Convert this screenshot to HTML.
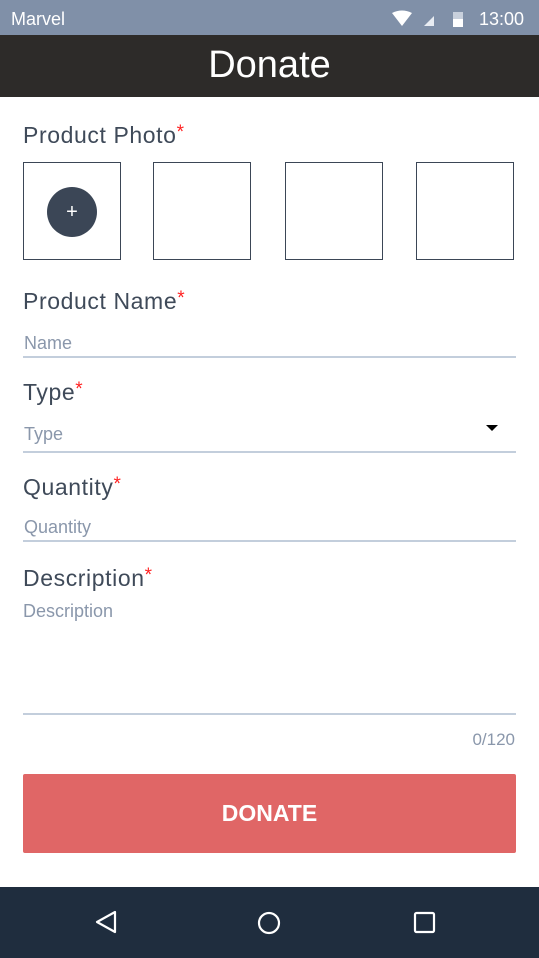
<!DOCTYPE html><html><head><style>
body{margin:0;width:539px;height:958px;position:relative;background:#fff;font-family:"Liberation Sans",sans-serif;overflow:hidden}
.a{position:absolute;white-space:nowrap}
.lbl{font-size:23px;letter-spacing:0.6px;color:#3f4a59;line-height:1}
.lbl i{font-style:normal;color:#f22;font-size:19px;vertical-align:top;position:relative;top:-1px;letter-spacing:0}
.ph{font-size:18px;color:#8a97ab;line-height:1}
.line{position:absolute;left:23px;width:493px;height:2px;background:#c3cedc}
.box{position:absolute;top:162px;width:96px;height:96px;border:1.5px solid #3b4656}
</style></head><body>
<div class="a" style="left:0;top:0;width:539px;height:35px;background:#8090a8;border-bottom:1px solid #666"></div>
<div class="a" style="left:11px;top:9px;font-size:18px;color:#fff">Marvel</div>
<svg class="a" style="left:390px;top:10px" width="80" height="18"><path d="M2 3 Q12 -2 22 3 L12 16Z" fill="#fff"/><path d="M34 16 L44 6 L44 16Z" fill="#e8ecf2"/><rect x="63" y="2" width="10" height="15" fill="#c8d0dc"/><rect x="63" y="9" width="10" height="8" fill="#fff"/></svg>
<div class="a" style="left:479px;top:9px;font-size:18px;color:#fff">13:00</div>
<div class="a" style="left:0;top:35px;width:539px;height:62px;background:#2d2b29"></div>
<div class="a" style="left:0;top:44px;width:539px;text-align:center;font-size:38px;color:#fff">Donate</div>
<div class="a lbl" style="left:23px;top:124px">Product Photo<i>*</i></div>
<div class="box" style="left:23px"></div><div class="box" style="left:153px"></div><div class="box" style="left:285px"></div><div class="box" style="left:416px"></div>
<div class="a" style="left:47px;top:187px;width:50px;height:50px;border-radius:50%;background:#3b4656;color:#fff;font-size:20px;text-align:center;line-height:50px">+</div>
<div class="a lbl" style="left:23px;top:290px">Product Name<i>*</i></div>
<div class="a ph" style="left:24px;top:334px">Name</div><div class="line" style="top:356px"></div>
<div class="a lbl" style="left:23px;top:381px">Type<i>*</i></div>
<div class="a ph" style="left:24px;top:425px">Type</div><div class="line" style="top:451px"></div>
<svg class="a" style="left:486px;top:425px" width="12" height="7"><path d="M0 0H12L6 6Z" fill="#000"/></svg>
<div class="a lbl" style="left:23px;top:476px">Quantity<i>*</i></div>
<div class="a ph" style="left:24px;top:518px">Quantity</div><div class="line" style="top:540px"></div>
<div class="a lbl" style="left:23px;top:567px">Description<i>*</i></div>
<div class="a ph" style="left:23px;top:602px">Description</div><div class="line" style="top:713px"></div>
<div class="a" style="right:24px;top:730px;font-size:17px;color:#8a97ab">0/120</div>
<div class="a" style="left:23px;top:774px;width:493px;height:79px;background:#e06666;border-radius:2px;color:#fff;font-weight:bold;font-size:23px;text-align:center;line-height:79px">DONATE</div>
<div class="a" style="left:0;top:887px;width:539px;height:71px;background:#1f2d3e"></div>
<svg class="a" style="left:0;top:887px" width="539" height="71"><path d="M115 25 L97 35 L115 45Z" fill="none" stroke="#fff" stroke-width="2.2" stroke-linejoin="round"/><circle cx="269" cy="36" r="10" fill="none" stroke="#fff" stroke-width="2.2"/><rect x="415" y="26" width="19" height="19" rx="1.5" fill="none" stroke="#fff" stroke-width="2.2"/></svg>
</body></html>
